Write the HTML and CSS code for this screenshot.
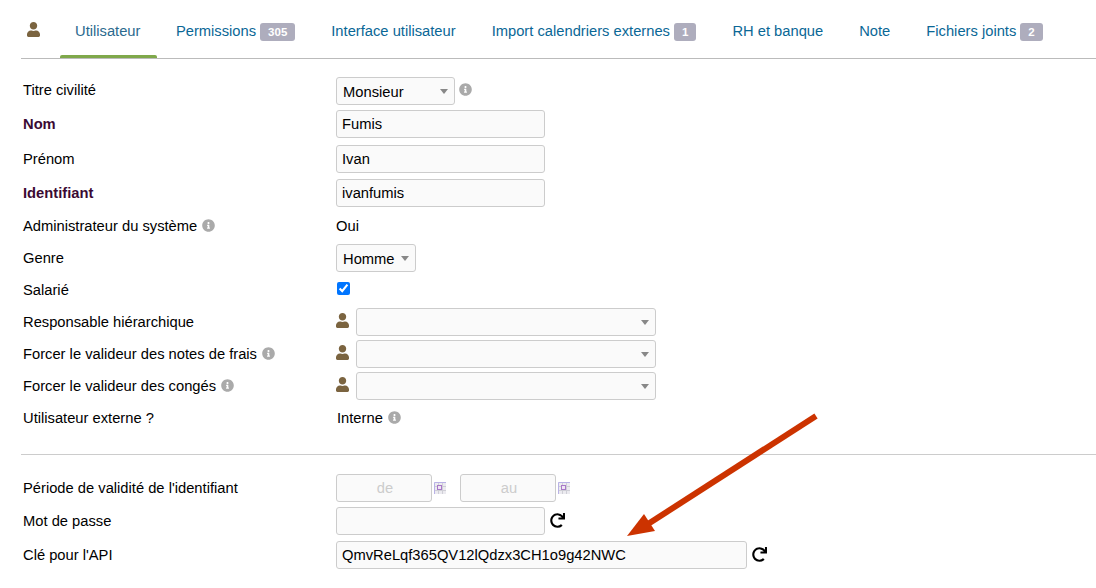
FILE: index.html
```html
<!DOCTYPE html>
<html lang="fr">
<head>
<meta charset="utf-8">
<title>Utilisateur</title>
<link rel="stylesheet" href="styles.css">
</head>
<body>
<svg class="defs" width="0" height="0">
    <symbol id="user" viewBox="0 0 448 512"><path d="M224 256c70.7 0 128-57.3 128-128S294.7 0 224 0 96 57.3 96 128s57.3 128 128 128zm89.6 32h-16.7c-22.2 10.2-46.9 16-72.9 16s-50.6-5.8-72.9-16h-16.7C60.2 288 0 348.2 0 422.4V464c0 26.5 21.5 48 48 48h352c26.5 0 48-21.5 48-48v-41.6c0-74.2-60.2-134.4-134.4-134.4z"/></symbol>
    <symbol id="info" viewBox="0 0 512 512"><path d="M256 8C119.043 8 8 119.083 8 256c0 136.997 111.043 248 248 248s248-111.003 248-248C504 119.083 392.957 8 256 8zm0 110c23.196 0 42 18.804 42 42s-18.804 42-42 42-42-18.804-42-42 18.804-42 42-42zm56 254c0 6.627-5.373 12-12 12h-88c-6.627 0-12-5.373-12-12v-24c0-6.627 5.373-12 12-12h12v-64h-12c-6.627 0-12-5.373-12-12v-24c0-6.627 5.373-12 12-12h64c6.627 0 12 5.373 12 12v100h12c6.627 0 12 5.373 12 12v24z"/></symbol>
    <symbol id="redo" viewBox="0 0 512 512"><path d="M500.33 0h-47.41a12 12 0 0 0-12 12.57l4 82.76A247.42 247.42 0 0 0 256 8C119.34 8 8.05 119.53 8 256.19 7.95 393.07 119 504 256 504a247.1 247.1 0 0 0 166.18-63.91 12 12 0 0 0 .48-17.43l-34-34a12 12 0 0 0-16.38-.55A176 176 0 1 1 402.1 157.8l-101.53-4.87a12 12 0 0 0-12.57 12v47.41a12 12 0 0 0 12 12h200.33a12 12 0 0 0 12-12V12a12 12 0 0 0-12-12z"/></symbol>
    <symbol id="cal" viewBox="0 0 12 12">
        <rect width="12" height="12" fill="#ecebf0"/>
        <path d="M4.5 1v11M8.5 1v11M1 4.5h11M1 8.5h11" stroke="#cfcfd6" stroke-width="1"/>
        <path d="M.5 12V.5H12" stroke="#b9b2e6" stroke-width="1" fill="none"/>
        <rect x="3.5" y="3.5" width="4" height="4" fill="#efe6f5" stroke="#a878c8" stroke-width="1"/>
    </symbol>
</svg>

<nav class="tabs">
    <svg class="tabIcon"><use href="#user"/></svg>
    <a class="tab active">Utilisateur</a>
    <a class="tab">Permissions<span class="badge">305</span></a>
    <a class="tab">Interface utilisateur</a>
    <a class="tab">Import calendriers externes<span class="badge">1</span></a>
    <a class="tab">RH et banque</a>
    <a class="tab">Note</a>
    <a class="tab">Fichiers joints<span class="badge">2</span></a>
</nav>

<section class="form first">
    <div class="row h32">
        <div class="label up">Titre civilité</div>
        <div class="value">
            <span class="select w119">Monsieur</span>
            <svg class="info up2"><use href="#info"/></svg>
        </div>
    </div>
    <div class="row h34">
        <div class="label strong">Nom</div>
        <div class="value"><input class="input w209" value="Fumis"></div>
    </div>
    <div class="row h35">
        <div class="label">Prénom</div>
        <div class="value"><input class="input w209" value="Ivan"></div>
    </div>
    <div class="row h34">
        <div class="label strong">Identifiant</div>
        <div class="value"><input class="input w209" value="ivanfumis"></div>
    </div>
    <div class="row h32">
        <div class="label">Administrateur du système <svg class="info"><use href="#info"/></svg></div>
        <div class="value">Oui</div>
    </div>
    <div class="row h32">
        <div class="label">Genre</div>
        <div class="value"><span class="select w80">Homme</span></div>
    </div>
    <div class="row h32">
        <div class="label">Salarié</div>
        <div class="value"><input class="check" type="checkbox" checked></div>
    </div>
    <div class="row h32">
        <div class="label">Responsable hiérarchique</div>
        <div class="value"><svg class="userIcon"><use href="#user"/></svg><span class="select w300"></span></div>
    </div>
    <div class="row h32">
        <div class="label">Forcer le valideur des notes de frais <svg class="info"><use href="#info"/></svg></div>
        <div class="value"><svg class="userIcon"><use href="#user"/></svg><span class="select w300"></span></div>
    </div>
    <div class="row h32">
        <div class="label">Forcer le valideur des congés <svg class="info"><use href="#info"/></svg></div>
        <div class="value"><svg class="userIcon"><use href="#user"/></svg><span class="select w300"></span></div>
    </div>
    <div class="row h32">
        <div class="label">Utilisateur externe ?</div>
        <div class="value indent">Interne<svg class="info up1"><use href="#info"/></svg></div>
    </div>
</section>

<hr class="sep">

<section class="form">
    <div class="row h32">
        <div class="label">Période de validité de l'identifiant</div>
        <div class="value">
            <input class="input w96 date" placeholder="de">
            <svg class="calIcon"><use href="#cal"/></svg>
            <input class="input w96 date second" placeholder="au">
            <svg class="calIcon"><use href="#cal"/></svg>
        </div>
    </div>
    <div class="row h34">
        <div class="label">Mot de passe</div>
        <div class="value"><input class="input w209"><svg class="redo"><use href="#redo"/></svg></div>
    </div>
    <div class="row h34">
        <div class="label">Clé pour l'API</div>
        <div class="value"><input class="input w411" value="QmvReLqf365QV12lQdzx3CH1o9g42NWC"><svg class="redo"><use href="#redo"/></svg></div>
    </div>
</section>

<!-- annotation drawn on top of the form -->
<svg class="arrow" width="1096" height="588" viewBox="0 0 1096 588">
    <path d="M816 416L648 524" stroke="#cc3300" stroke-width="6" fill="none"/>
    <polygon points="627,536 644,514 655,531" fill="#cc3300"/>
</svg>
</body>
</html>
```

FILE: styles.css
```css
body {
    margin: 0;
    font-family: "Liberation Sans", Arial, sans-serif;
    font-size: 14.72px;
    color: #000;
    background: #fff;
}
.defs {position: absolute;}

/* tabs */
.tabs {
    display: flex;
    align-items: center;
    height: 58px;
    margin-left: 21px;
    border-bottom: 1px solid #bbb;
}
.tabIcon {width: 13px; height: 15px; margin: 0 17px 0 6px; fill: #7b6440;}
.tab {
    display: flex;
    align-items: center;
    gap: 4px;
    height: 58px;
    padding: 4px 18px 0;
    box-sizing: border-box;
    color: #0a6796;
    white-space: nowrap;
}
.tab.active {color: #2b6a8e; position: relative; margin-right: -0.5px;}
.tab.active::after {
    content: "";
    position: absolute;
    left: 3px;
    right: 1px;
    bottom: 0;
    height: 3px;
    border-radius: 2px 2px 0 0;
    background: #7fa84a;
}
.badge {
    display: inline-block;
    padding: 0 8px;
    height: 18px;
    line-height: 18px;
    margin-top: 2px;
    border-radius: 3px;
    background: #aeadbd;
    color: #fff;
    font-size: 11.5px;
    font-weight: bold;
    text-align: center;
}

/* form rows */
.form {margin-left: 23px;}
.form.first {margin-top: 16px;}
.row {display: flex; align-items: center;}
.h32 {height: 32px;}
.h34 {height: 34px;}
.h35 {height: 35px;}
.label {width: 313px; flex: none;}
.label.up {padding-bottom: 3px;}
.label.strong {font-weight: bold; color: #3b0a33;}
.value {display: flex; align-items: center; gap: 4px; white-space: pre;}
.value.indent {padding-left: 1px;}

.input, .select {
    box-sizing: border-box;
    height: 28px;
    border: 1px solid #ccc;
    border-radius: 3px;
    background: #fafafa;
    font-family: inherit;
    font-size: 14.72px;
    color: #000;
    padding: 0 5px;
}
.input {outline: none;}
.w209 {width: 209px;}
.w96 {width: 96px;}
.w411 {width: 411px;}
.date {text-align: center; padding-left: 7px;}
.date::placeholder {color: #ccc; opacity: 1;}
.second {margin-left: 10px;}

.select {
    display: inline-flex;
    align-items: center;
    position: relative;
    padding: 1px 0 0 6px;
}
.select::after {
    content: "";
    position: absolute;
    right: 6px;
    top: 11px;
    border-left: 4px solid transparent;
    border-right: 4px solid transparent;
    border-top: 5px solid #888;
}
.w119 {width: 119px;}
.w80 {width: 80px;}
.w300 {width: 300px;}

.info {width: 13px; height: 13px; fill: #aaa; vertical-align: -1px; margin-left: 1px;}
.up1 {position: relative; top: -1px;}
.up2 {position: relative; top: -2px; margin-left: 0;}
.userIcon {width: 13px; height: 15px; fill: #7b6440; margin-right: 3px; position: relative; top: -2px;}
.check {margin: 0 0 0 1px; width: 13px; height: 13px; position: relative; top: -2px;}
.calIcon {width: 12px; height: 12px; margin-left: -2px;}
.redo {width: 15px; height: 15px; fill: #000; margin-left: 1px; position: relative; top: -1px;}

.sep {
    height: 1px;
    border: none;
    background: #ccc;
    margin: 20px 0 17px 21px;
}

.arrow {position: absolute; left: 0; top: 0; pointer-events: none;}
```
